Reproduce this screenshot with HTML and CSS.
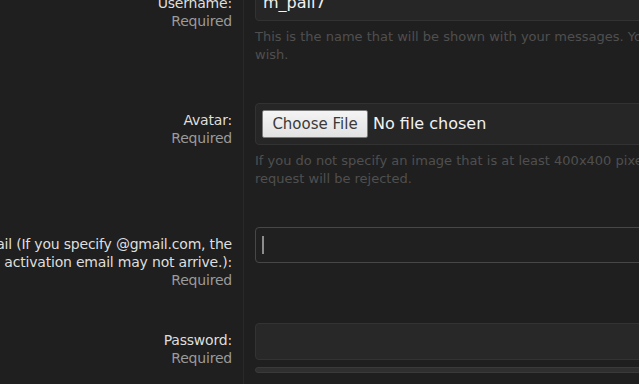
FILE: index.html
```html
<!DOCTYPE html>
<html lang="en">
<head>
<meta charset="utf-8">
<title>Register</title>
<link rel="stylesheet" href="styles.css">
</head>
<body>
<form class="form">
  <div class="row row-username">
    <label class="label" for="username">
      <span class="label-title">Username:</span>
      <span class="label-req">Required</span>
    </label>
    <div class="field">
      <input class="text-input" id="username" type="text" value="m_pall7">
      <p class="help">This is the name that will be shown with your messages. You may use any name you wish.</p>
    </div>
  </div>
  <div class="row row-avatar">
    <label class="label" for="avatar">
      <span class="label-title">Avatar:</span>
      <span class="label-req">Required</span>
    </label>
    <div class="field">
      <div class="file-box">
        <input class="file-input" id="avatar" type="file">
      </div>
      <p class="help">If you do not specify an image that is at least 400x400 pixels, your registration request will be rejected.</p>
    </div>
  </div>
  <div class="row row-email">
    <label class="label" for="email">
      <span class="label-title">Email (If you specify @gmail.com, the activation email may not arrive.):</span>
      <span class="label-req">Required</span>
    </label>
    <div class="field">
      <div class="caret-wrap">
        <input class="text-input text-input-focus" id="email" type="email">
      </div>
    </div>
  </div>
  <div class="row row-password">
    <label class="label" for="password">
      <span class="label-title">Password:</span>
      <span class="label-req">Required</span>
    </label>
    <div class="field">
      <input class="text-input text-input-filled" id="password" type="password">
      <div class="strength"></div>
    </div>
  </div>
</form>
</body>
</html>
```
FILE: styles.css
```css
html, body {
  margin: 0;
  padding: 0;
  background: #1f1f1f;
  overflow: hidden;
  height: 100%;
}
body {
  font-family: "DejaVu Sans", sans-serif;
  font-size: 14px;
  color: #d8d8d8;
}
.form {
  margin-top: -16px;
  margin-left: -70px;
  width: 887px;
  display: flex;
  flex-direction: column;
}
.row {
  display: grid;
  grid-template-columns: 313px 1fr;
}
.label {
  padding: 8px 11px 34px 0;
  text-align: right;
  line-height: 18px;
  letter-spacing: -0.2px;
  display: flex;
  flex-direction: column;
}
.row-username .label {
  padding-top: 10px;
}
.label-title {
  color: #dedede;
}
.label-req {
  color: #9b9b9b;
}
.field {
  border-left: 1px solid #292929;
  padding: 0 0 39px 11px;
}
.text-input {
  display: block;
  box-sizing: border-box;
  width: 100%;
  height: 37px;
  margin: 0;
  padding: 0 7px;
  border: 1px solid #323232;
  border-radius: 4px;
  background: #262626;
  color: #f2f2f2;
  font-family: inherit;
  font-size: 16px;
  outline: none;
}
.text-input-focus {
  background: #202020;
  border-color: #474747;
  height: 36px;
}
.text-input-filled {
  background: #282828;
  border-color: #333333;
  height: 37px;
}
.caret-wrap {
  position: relative;
}
.caret-wrap::after {
  content: "";
  position: absolute;
  left: 7px;
  top: 9px;
  width: 2px;
  height: 18px;
  background: #8c8c8c;
}
.help {
  margin: 7px 0 0;
  line-height: 18px;
  color: #4f4f4f;
  font-size: 13px;
}
.file-box {
  box-sizing: border-box;
  height: 42px;
  border: 1px solid #323232;
  border-radius: 4px;
  background: #262626;
  padding: 6px 6px;
  display: flex;
  align-items: center;
}
.file-input {
  color: #f2f2f2;
  font-family: inherit;
  font-size: 16px;
}
.file-input::file-selector-button {
  box-sizing: border-box;
  width: 106px;
  height: 28px;
  margin-right: 5px;
  border: 1px solid #7a7a7a;
  border-radius: 2px;
  background: linear-gradient(#f4f4f4, #e2e2e2);
  color: #3a3a3a;
  font-family: inherit;
  font-size: 15px;
}
.strength {
  box-sizing: border-box;
  margin-top: 7px;
  height: 6px;
  border: 1px solid #3a3a3a;
  border-radius: 3px;
  background: #2f2f2f;
}
```
